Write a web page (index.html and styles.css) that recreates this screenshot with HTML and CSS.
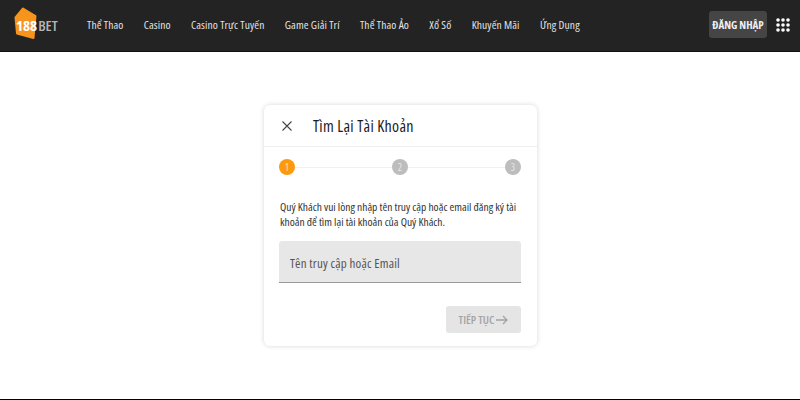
FILE: index.html
```html
<!DOCTYPE html>
<html lang="vi">
<head>
<meta charset="utf-8">
<title>188BET</title>
<link rel="stylesheet" href="styles.css">
</head>
<body>
<header class="topbar">
  <a class="logo">
    <svg class="logo-mark" width="24" height="33" viewBox="0 0 24 33"><path d="M9 1.500 21.500 9 19.500 31 3 26.500 1.500 10.500Z" fill="#f7941d" stroke="#f7941d" stroke-width="2" stroke-linejoin="round"/></svg>
    <span class="logo-num">188</span><span class="logo-bet">BET</span>
  </a>
  <nav class="nav">
    <a>Thể Thao</a><a>Casino</a><a>Casino Trực Tuyến</a><a>Game Giải Trí</a><a>Thể Thao Ảo</a><a>Xổ Số</a><a>Khuyến Mãi</a><a>Ứng Dụng</a>
  </nav>
  <button class="login">ĐĂNG NHẬP</button>
  <svg class="grid-icon" width="14" height="14" viewBox="0 0 14 14" fill="#fff">
    <circle cx="2" cy="2" r="1.800"/><circle cx="7" cy="2" r="1.800"/><circle cx="12" cy="2" r="1.800"/>
    <circle cx="2" cy="7" r="1.800"/><circle cx="7" cy="7" r="1.800"/><circle cx="12" cy="7" r="1.800"/>
    <circle cx="2" cy="12" r="1.800"/><circle cx="7" cy="12" r="1.800"/><circle cx="12" cy="12" r="1.800"/>
  </svg>
</header>
<main class="page">
  <section class="card">
    <div class="card-head">
      <svg class="close" width="10" height="10" viewBox="0 0 10 10"><path d="M.5.500l9 9M9.500.500l-9 9" stroke="#444" stroke-width="1.100" fill="none"/></svg>
      <h1>Tìm Lại Tài Khoản</h1>
    </div>
    <div class="card-body">
      <div class="steps">
        <span class="step active">1</span><span class="line"></span>
        <span class="step">2</span><span class="line"></span>
        <span class="step">3</span>
      </div>
      <p class="desc">Quý Khách vui lòng nhập tên truy cập hoặc email đăng ký tài khoản để tìm lại tài khoản của Quý Khách.</p>
      <div class="field">Tên truy cập hoặc Email</div>
      <div class="actions">
        <button class="next">TIẾP TỤC
          <svg width="12" height="10" viewBox="0 0 12 10"><path d="M0 5h11M7 1l4 4-4 4" stroke="#a3a3a3" stroke-width="1.300" fill="none"/></svg>
        </button>
      </div>
    </div>
  </section>
</main>
</body>
</html>
```
FILE: styles.css
```css
* { box-sizing: border-box; }
html, body { margin: 0; height: 400px; overflow: hidden; }
body {
  display: flex;
  flex-direction: column;
  background: #fff;
  border-bottom: 1px solid #000;
  font-family: "Open Sans", sans-serif;
  font-stretch: 75%;
  color: #222;
}
button { font-family: inherit; font-stretch: inherit; }
.topbar {
  height: 52px;
  background: #232323;
  border-bottom: 1px solid #111;
  display: flex;
  align-items: center;
  padding: 0 10px 2px 13px;
  flex: none;
}
.logo {
  position: relative;
  width: 74px;
  height: 34px;
  display: flex;
  align-items: center;
  padding-left: 3px;
  font-weight: 700;
  font-size: 15px;
}
.logo-mark { position: absolute; left: 1px; top: -1px; }
.logo-num { position: relative; color: #fff; }
.logo-bet { position: relative; color: #b5b5b5; font-weight: 600; font-size: 15px; margin-left: 1px; }
.nav { display: flex; gap: 20.300px; flex: 1; }
.nav a { color: #e2e2e2; font-size: 11.500px; font-weight: 500; letter-spacing: .1px; white-space: nowrap; }
.login {
  width: 58px;
  height: 27px;
  background: #454545;
  border: 0;
  border-radius: 3px;
  color: #f0f0f0;
  font-weight: 700;
  font-size: 11px;
  padding: 0;
  white-space: nowrap;
}
.grid-icon { margin-left: 9px; }
.page { flex: 1; display: flex; justify-content: center; padding: 53px 0 0 1px; }
.card {
  width: 273px;
  height: 241px;
  border-radius: 6px;
  background: #fff;
  box-shadow: 0 0 5px rgba(0,0,0,.16);
}
.card-head {
  height: 42px;
  display: flex;
  align-items: center;
  padding-left: 18px;
  border-bottom: 1px solid #eee;
}
.card-head h1 { margin: 0 0 0 21px; font-size: 16px; letter-spacing: .3px; font-weight: 400; color: #1c1c1c; }
.card-body { padding: 12px 16px 0 15px; }
.steps { display: flex; align-items: center; }
.step {
  width: 16px;
  height: 16px;
  border-radius: 50%;
  background: #bdbdbd;
  color: #e8e8e8;
  font-size: 10px;
  display: flex;
  align-items: center;
  justify-content: center;
  flex: none;
}
.step.active { background: #fb9a0e; color: #ffe3b5; }
.line { flex: 1; height: 1px; background: #f0f0f0; }
.desc { margin: 24px 0 0 1px; font-size: 11.500px; line-height: 15px; color: #333; }
.field {
  margin-top: 12px;
  height: 42px;
  background: #e7e7e7;
  border-bottom: 1px solid #999;
  border-radius: 3px 3px 0 0;
  padding: 15px 11px 0;
  font-size: 13px;
  letter-spacing: .2px;
  line-height: 15px;
  color: #555;
}
.actions { display: flex; justify-content: flex-end; margin-top: 23px; }
.next {
  width: 75px;
  height: 27px;
  background: #e5e5e5;
  border: 0;
  border-radius: 3px;
  color: #a3a3a3;
  font-weight: 600;
  font-size: 11.500px;
  padding: 0;
  display: flex;
  align-items: center;
  justify-content: center;
  gap: 2px;
}
```
